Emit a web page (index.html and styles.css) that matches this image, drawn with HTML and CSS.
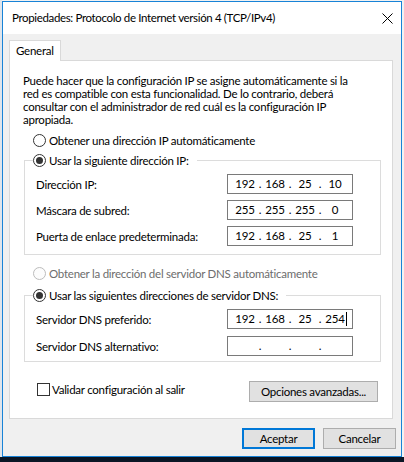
FILE: index.html
```html
<!DOCTYPE html>
<html lang="es">
<head>
<meta charset="utf-8">
<title>Propiedades: Protocolo de Internet versión 4 (TCP/IPv4)</title>
<link rel="stylesheet" href="styles.css">
</head>
<body>
<div class="desktop">
  <div class="window">
    <div class="titlebar">
      <span class="title">Propiedades: Protocolo de Internet versión 4 (TCP/IPv4)</span>
      <svg class="close" width="11" height="11" viewBox="0 0 11 11" aria-label="Cerrar"><path d="M0.5 0.5L10.5 10.5M10.5 0.5L0.5 10.5" stroke="#000" stroke-width="1" fill="none"/></svg>
    </div>
    <div class="client">
      <div class="tabs"><div class="tab">General</div></div>
      <div class="panel">
        <p class="intro">Puede hacer que la configuración IP se asigne automáticamente si la<br>red es compatible con esta funcionalidad. De lo contrario, deberá<br>consultar con el administrador de red cuál es la configuración IP<br>apropiada.</p>

        <div class="option first-option"><span class="radio"></span><span>Obtener una dirección IP automáticamente</span></div>

        <fieldset class="group group-ip">
          <legend class="option"><span class="radio checked"></span><span>Usar la siguiente dirección IP:</span></legend>
          <div class="field">
            <span class="label">Dirección IP:</span>
            <div class="ip"><span class="seg">192</span><span class="dot">.</span><span class="seg">168</span><span class="dot">.</span><span class="seg">25</span><span class="dot">.</span><span class="seg">10</span></div>
          </div>
          <div class="field">
            <span class="label">Máscara de subred:</span>
            <div class="ip"><span class="seg">255</span><span class="dot">.</span><span class="seg">255</span><span class="dot">.</span><span class="seg">255</span><span class="dot">.</span><span class="seg">0</span></div>
          </div>
          <div class="field">
            <span class="label">Puerta de enlace predeterminada:</span>
            <div class="ip"><span class="seg">192</span><span class="dot">.</span><span class="seg">168</span><span class="dot">.</span><span class="seg">25</span><span class="dot">.</span><span class="seg">1</span></div>
          </div>
        </fieldset>

        <div class="option disabled dns-auto"><span class="radio"></span><span>Obtener la dirección del servidor DNS automáticamente</span></div>

        <fieldset class="group group-dns">
          <legend class="option"><span class="radio checked"></span><span>Usar las siguientes direcciones de servidor DNS:</span></legend>
          <div class="field">
            <span class="label">Servidor DNS preferido:</span>
            <div class="ip"><span class="seg">192</span><span class="dot">.</span><span class="seg">168</span><span class="dot">.</span><span class="seg">25</span><span class="dot">.</span><span class="seg">254<span class="caret"></span></span></div>
          </div>
          <div class="field">
            <span class="label">Servidor DNS alternativo:</span>
            <div class="ip"><span class="seg"></span><span class="dot">.</span><span class="seg"></span><span class="dot">.</span><span class="seg"></span><span class="dot">.</span><span class="seg"></span></div>
          </div>
        </fieldset>

        <div class="bottom-row">
          <label class="check-label"><span class="checkbox"></span><span>Validar configuración al salir</span></label>
          <button class="btn btn-adv" type="button">Opciones avanzadas...</button>
        </div>
      </div>
      <div class="buttons">
        <button class="btn btn-default" type="button">Aceptar</button>
        <button class="btn" type="button">Cancelar</button>
      </div>
    </div>
  </div>
  <div class="taskbar"></div>
</div>
</body>
</html>
```

FILE: styles.css
```css
* { box-sizing: border-box; }

html, body {
  margin: 0;
  padding: 0;
}

body {
  width: 404px;
  height: 462px;
  overflow: hidden;
  font-family: "Lato", "Liberation Sans", sans-serif;
  font-size: 11.5px;
  letter-spacing: -0.25px;
  color: #000;
  background: #e6eaee;
}

.desktop {
  width: 404px;
  height: 462px;
  display: flex;
  flex-direction: column;
  background: linear-gradient(to right, #dfe5ec 0, #dfe5ec 2px, #f2f2f2 2px);
}

.window {
  margin: 1px 0 0 2px;
  width: 400px;
  height: 456px;
  border: 1px solid #1883d7;
  background: #f0f0f0;
  display: flex;
  flex-direction: column;
  flex: none;
}

.titlebar {
  height: 32px;
  background: #fff;
  display: flex;
  align-items: center;
  justify-content: space-between;
  padding: 0 8px 0 9px;
  flex: none;
}

.title {
  font-size: 11.5px;
  letter-spacing: -0.35px;
  white-space: nowrap;
  padding-bottom: 1px;
}

.close { display: block; }

.client {
  flex: 1;
  padding: 6px 6px 0 6px;
  display: flex;
  flex-direction: column;
}

.tabs {
  display: flex;
  height: 20px;
  position: relative;
  z-index: 1;
}

.tab {
  width: 52px;
  height: 21px;
  border: 1px solid #d9d9d9;
  border-bottom: none;
  background: #fff;
  padding: 2px 0 0 6px;
  line-height: 15px;
}

.panel {
  width: 384px;
  height: 359px;
  border: 1px solid #d9d9d9;
  background: #fff;
  display: flex;
  flex-direction: column;
}

.intro {
  margin: 13px 0 0 13px;
  line-height: 13px;
  white-space: nowrap;
}

.option {
  display: flex;
  align-items: center;
  height: 15px;
  line-height: 15px;
  white-space: nowrap;
}

.first-option {
  margin: 7px 0 0 23px;
}

.radio {
  width: 13px;
  height: 13px;
  border: 1px solid #333;
  border-radius: 50%;
  background: #fff;
  margin-right: 3px;
  display: flex;
  align-items: center;
  justify-content: center;
  flex: none;
}

.radio.checked::after {
  content: "";
  width: 7px;
  height: 7px;
  border-radius: 50%;
  background: #333;
}

.disabled { color: #6d6d6d; }
.disabled .radio {
  border-color: #bcbcbc;
  background: #fcfcfc;
}

.group {
  margin: 0 0 0 14px;
  padding: 0 27px 0 11px;
  width: 357px;
  border: 1px solid #dcdcdc;
  min-width: 0;
}

.group legend {
  padding: 0 8px 0 0;
  margin-left: -3px;
}

.group-ip {
  margin-top: 5px;
  padding-bottom: 8px;
}

.group-dns {
  margin-top: 7px;
  padding-bottom: 5px;
}

.field {
  display: flex;
  align-items: center;
  height: 20px;
  margin-top: 6px;
}

.group-ip .field:first-of-type { margin-top: 6px; }
.group-dns .field:first-of-type { margin-top: 6px; }
.group-dns .field + .field { margin-top: 7px; }

.label {
  flex: 1;
  white-space: nowrap;
}

.ip {
  flex: none;
  width: 126px;
  height: 20px;
  border: 1px solid #7a7a7a;
  background: #fff;
  display: flex;
  align-items: center;
  padding: 0 4px 1px 5px;
}

.seg {
  width: 24px;
  text-align: center;
  line-height: 15px;
  white-space: nowrap;
}

.dot {
  width: 6px;
  text-align: center;
  line-height: 15px;
}

.caret {
  display: inline-block;
  width: 1px;
  height: 14px;
  background: #000;
  vertical-align: -3px;
  margin-left: 1px;
  margin-right: -2px;
}

.dns-auto {
  margin: 11px 0 0 23px;
}

.bottom-row {
  margin: 19px 14px 0 27px;
  display: flex;
  align-items: flex-start;
  justify-content: space-between;
}

.check-label {
  display: flex;
  align-items: center;
  height: 15px;
  line-height: 15px;
  margin-top: 1px;
  white-space: nowrap;
}

.checkbox {
  width: 13px;
  height: 13px;
  border: 1px solid #333;
  background: #fff;
  margin-right: 2px;
  flex: none;
}

.btn {
  font-family: inherit;
  font-size: inherit;
  letter-spacing: inherit;
  color: #000;
  background: #e1e1e1;
  border: 1px solid #adadad;
  border-radius: 0;
  height: 21px;
  padding: 0 0 1px 0;
  margin: 0;
  line-height: 15px;
}

.btn-adv { width: 129px; }

.buttons {
  margin-top: 9px;
  display: flex;
  justify-content: flex-end;
  gap: 8px;
  margin-right: -1px;
}

.buttons .btn {
  width: 73px;
  height: 21px;
}

.btn-default {
  border: 2px solid #0078d7;
}

.taskbar {
  flex: 1;
  background: #0b1625;
}
```
